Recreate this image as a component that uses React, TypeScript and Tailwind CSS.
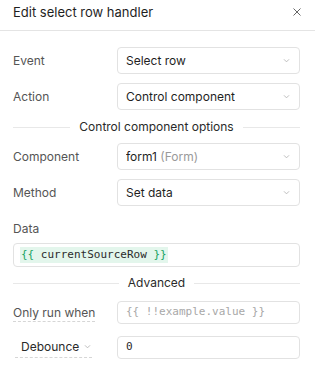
import React from 'react';

const font = { fontFamily: 'Inter, "Noto Sans", sans-serif' };
const mono = { fontFamily: '"DejaVu Sans Mono", monospace' };

const Chevron = () => (
  <svg width="9" height="9" viewBox="0 0 10 10" fill="none" className="shrink-0">
    <path d="M2.5 4 L5 6.5 L7.5 4" stroke="#b5b5b5" strokeWidth="1" strokeLinecap="round" strokeLinejoin="round" />
  </svg>
);

const Select = ({ children }: { children: React.ReactNode }) => (
  <div className="flex h-[27px] w-[183px] items-center justify-between rounded-[4px] border border-[#e2e2e2] bg-white pl-[8px] pr-[8px] text-[12px] text-[#1f1f1f]">
    <span className="truncate">{children}</span>
    <Chevron />
  </div>
);

const Row = ({ label, children }: { label: React.ReactNode; children: React.ReactNode }) => (
  <div className="flex items-center">
    <div className="w-[104px] text-[12px] text-[#555]">{label}</div>
    {children}
  </div>
);

const Divider = ({ title }: { title: string }) => (
  <div className="flex items-center gap-[9px]">
    <div className="h-px flex-1 bg-[#e8e8e8]" />
    <span className="text-[12px] leading-[16px] text-[#2a2a2a]">{title}</span>
    <div className="h-px flex-1 bg-[#e8e8e8]" />
  </div>
);

export default function App() {
  return (
    <div className="h-[375px] w-[315px] overflow-hidden bg-white" style={font}>
      {/* Header */}
      <div className="flex h-[31px] items-start justify-between border-b border-[#e4e4e4] pl-[13px] pr-[13px] pt-[3px]">
        <span className="text-[13px] leading-[18px] text-[#1f1f1f]">Edit select row handler</span>
        <svg width="10" height="10" viewBox="0 0 10 10" className="mt-[4px]">
          <path d="M1.5 1.5 L8.5 8.5 M8.5 1.5 L1.5 8.5" stroke="#555" strokeWidth="0.9" />
        </svg>
      </div>

      <div className="flex flex-col pl-[13px] pr-[15px] pt-[16px]">
        <div className="flex flex-col gap-[9px]">
          <Row label="Event">
            <Select>Select row</Select>
          </Row>
          <Row label="Action">
            <Select>Control component</Select>
          </Row>
        </div>

        <div className="mt-[9px] mb-[8px]">
          <Divider title="Control component options" />
        </div>

        <div className="flex flex-col gap-[9px]">
          <Row label="Component">
            <Select>
              form1 <span className="text-[#9a9a9a]">(Form)</span>
            </Select>
          </Row>
          <Row label="Method">
            <Select>Set data</Select>
          </Row>
        </div>

        <div className="mt-[15px] text-[12px] leading-[16px] text-[#555]">Data</div>
        <div className="mt-[6px] flex h-[24px] items-center rounded-[4px] border border-[#e2e2e2] pl-[6px] text-[11px]" style={mono}>
          <span className="bg-[#e3f6ec] px-px text-[#2b2b2b]">
            <span className="text-[#19a463]">{'{{'}</span> currentSourceRow <span className="text-[#19a463]">{'}}'}</span>
          </span>
        </div>

        <div className="mt-[8px] mb-[10px]">
          <Divider title="Advanced" />
        </div>

        <div className="flex flex-col gap-[12px]">
          <Row
            label={
              <span className="border-b border-dashed border-[#d6d6d6] pb-[1px]">Only run when</span>
            }
          >
            <div className="flex h-[23px] w-[183px] items-center rounded-[4px] border border-[#e2e2e2] pl-[8px] text-[11px] text-[#a8a8a8]" style={mono}>
              {'{{ !!example.value }}'}
            </div>
          </Row>
          <Row
            label={
              <span className="ml-[2px] inline-flex items-center gap-[4px] border-b border-dashed border-[#d6d6d6] pb-[1px] pl-[6px]">
                <span className="text-[#2a2a2a]">Debounce</span>
                <Chevron />
              </span>
            }
          >
            <div className="flex h-[23px] w-[183px] items-center rounded-[4px] border border-[#e2e2e2] pl-[8px] text-[11px] text-[#2a2a2a]" style={mono}>
              0
            </div>
          </Row>
        </div>
      </div>
    </div>
  );
}
